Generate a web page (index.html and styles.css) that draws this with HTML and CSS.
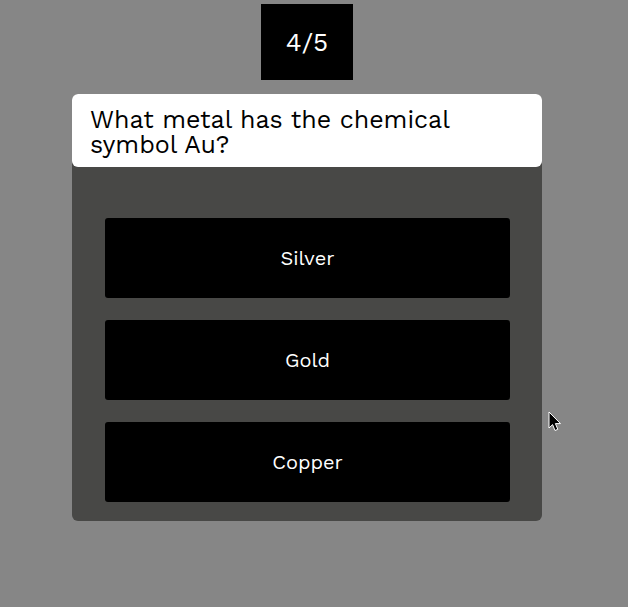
FILE: index.html
```html
<!DOCTYPE html>
<html lang="en">
<head>
<meta charset="utf-8">
<meta name="viewport" content="width=device-width, initial-scale=1">
<title>Quiz</title>
<link rel="stylesheet" href="styles.css">
</head>
<body>
<main class="quiz">
  <div class="counter">4/5</div>
  <section class="card">
    <h1 class="question">What metal has the chemical symbol Au?</h1>
    <div class="answers">
      <button class="answer" type="button">Silver</button>
      <button class="answer" type="button">Gold</button>
      <button class="answer" type="button">Copper</button>
    </div>
  </section>
</main>
<svg class="pointer" viewBox="0 0 14 22" aria-hidden="true">
  <path d="M1 1V17L4.600 13.600L7 19.500L9.800 18.300L7.400 12.600H12.500Z"/>
</svg>
</body>
</html>
```
FILE: styles.css
```css
* {
  box-sizing: border-box;
}

body {
  margin: 0;
  min-height: 100vh;
  background: #868686;
  font-family: "Work Sans", Inter, sans-serif;
}

.quiz {
  display: flex;
  flex-direction: column;
  align-items: center;
  gap: 14px;
  padding: 4px 86px 0 72px;
}

.counter {
  padding: 22px 25px;
  background: #000;
  color: #fff;
  font-size: 26px;
  font-weight: 400;
  line-height: 32px;
}

.card {
  width: 100%;
  background: #484846;
  border-radius: 6px;
}

.question {
  margin: 0;
  padding: 13px 18px 10px;
  background: #fff;
  border-radius: 6px;
  color: #000;
  font-size: 25px;
  font-weight: 400;
  line-height: 25px;
}

.answers {
  display: grid;
  gap: 22px;
  padding: 51px 32px 19px 33px;
}

.answer {
  height: 80px;
  border: 0;
  border-radius: 3px;
  background: #000;
  color: #fff;
  font: inherit;
  font-size: 20px;
  font-weight: 400;
}

.pointer {
  position: absolute;
  left: 548px;
  top: 411px;
  width: 14px;
  height: 22px;
  fill: #000;
  stroke: #fff;
}
```
